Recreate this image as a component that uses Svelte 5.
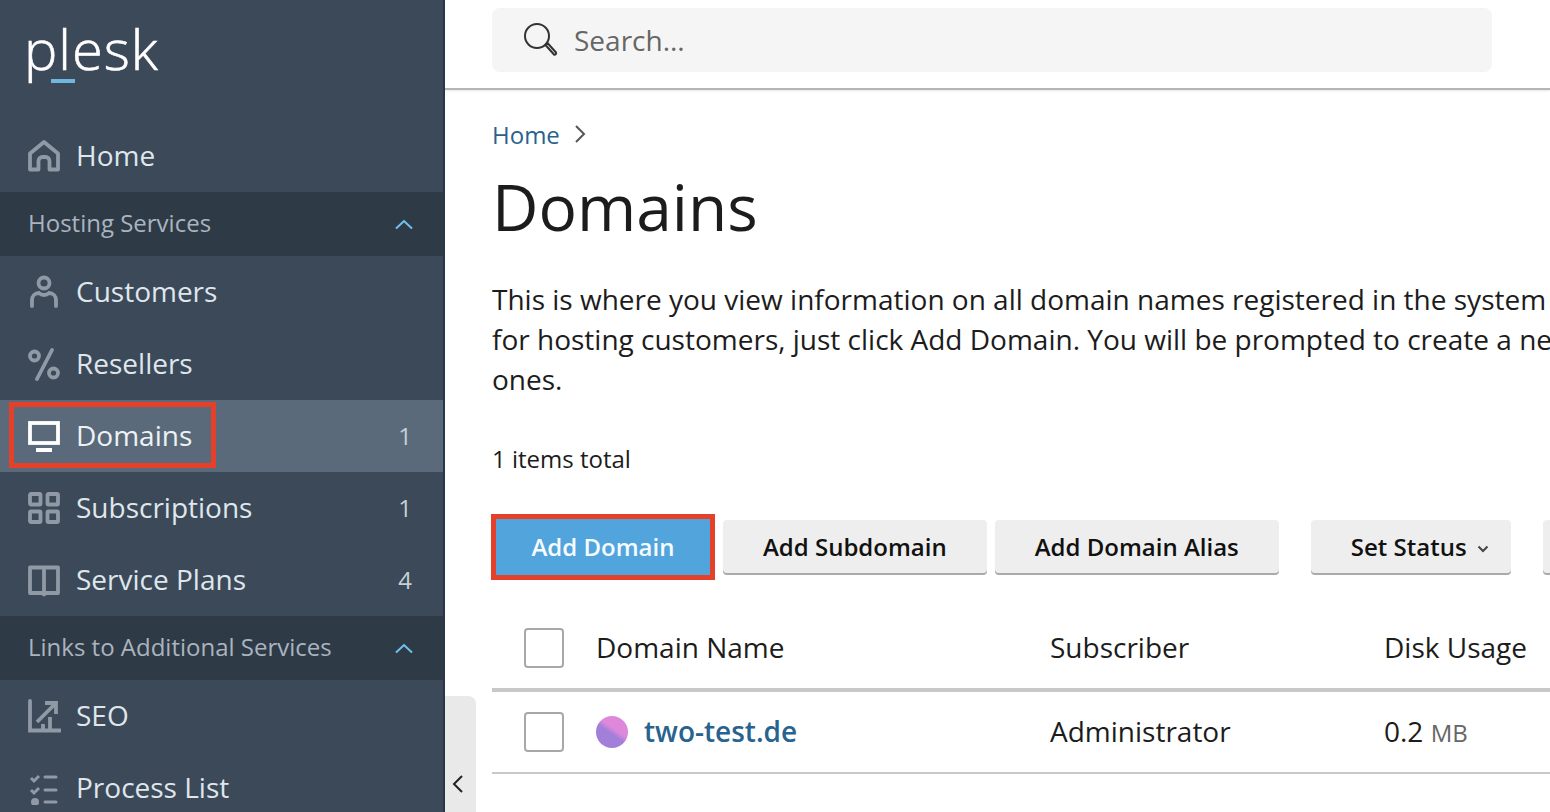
<script>
  const menu = [
    { type: 'item', icon: 'home', label: 'Home' },
    { type: 'group', label: 'Hosting Services' },
    { type: 'item', icon: 'user', label: 'Customers' },
    { type: 'item', icon: 'percent', label: 'Resellers' },
    { type: 'item', icon: 'monitor', label: 'Domains', count: 1, active: true },
    { type: 'item', icon: 'grid', label: 'Subscriptions', count: 1 },
    { type: 'item', icon: 'book', label: 'Service Plans', count: 4 },
    { type: 'group', label: 'Links to Additional Services' },
    { type: 'item', icon: 'chart', label: 'SEO' },
    { type: 'item', icon: 'list', label: 'Process List' }
  ];
</script>

<div class="app">
  <aside class="sidebar">
    <div class="logo"><span class="logo-text">plesk</span><span class="logo-bar"></span></div>
    <nav>
      {#each menu as m}
        {#if m.type === 'group'}
          <div class="group">
            <span>{m.label}</span>
            <svg width="20" height="12" viewBox="0 0 20 12" fill="none" stroke="#6fc3ee" stroke-width="2"><path d="M2 10.500 10 3l8 7.500" /></svg>
          </div>
        {:else}
          <div class="item" class:active={m.active}>
            {#if m.active}<span class="mark"></span>{/if}
            <svg class="ic" width="34" height="34" viewBox="0 0 34 34" fill="none" stroke={m.active ? '#fff' : '#8f9aa5'} stroke-width="3.800">
              {#if m.icon === 'home'}
                <path d="M3 30.500V14.500L17 3l14 11.500v16H22.500V22a4 4 0 0 0-4-4h-3a4 4 0 0 0-4 4v8.500Z" stroke-linejoin="round" />
              {:else if m.icon === 'user'}
                <circle cx="17" cy="8" r="5.500" />
                <path d="M5 31v-6c0-4 3-7 7-7 1.500 1.500 3 2 5 2s3.500-.5 5-2c4 0 7 3 7 7v6" stroke-linecap="round" />
              {:else if m.icon === 'percent'}
                <circle cx="7.500" cy="9" r="4.500" />
                <circle cx="26.500" cy="26" r="4.500" />
                <path d="M25 3 10 32" stroke-linecap="round" />
              {:else if m.icon === 'monitor'}
                <rect x="3" y="4" width="28" height="20" />
                <rect x="9" y="29" width="16" height="4" fill="#fff" stroke="none" />
              {:else if m.icon === 'grid'}
                <rect x="3" y="3" width="10.500" height="10.500" rx="1" />
                <rect x="20.500" y="3" width="10.500" height="10.500" rx="1" />
                <rect x="3" y="20.500" width="10.500" height="10.500" rx="1" />
                <rect x="20.500" y="20.500" width="10.500" height="10.500" rx="1" />
              {:else if m.icon === 'book'}
                <path d="M3 4.500h14h14v25.500H19l-2 1.500-2-1.500H3Z" stroke-linejoin="round" />
                <path d="M17 5v25" />
              {:else if m.icon === 'chart'}
                <path d="M3 2v29.500h30" stroke-linecap="round" />
                <path d="M10 23 27 6M18 4h11v11" />
                <path d="M16 30v-5M23 30V18" />
              {:else if m.icon === 'list'}
                <path d="M4 7l3 3 5-5M4 19l3 3 5-5" stroke-width="3" />
                <circle cx="8" cy="31" r="4" fill="#8f9aa5" stroke="none" />
                <path d="M18 6h11M18 19h11M18 31h11" stroke-linecap="round" stroke-width="3" />
              {/if}
            </svg>
            <span class="label">{m.label}</span>
            {#if m.count}<span class="count">{m.count}</span>{/if}
          </div>
        {/if}
      {/each}
    </nav>
  </aside>

  <button class="collapse" aria-label="Collapse">
    <svg width="12" height="20" viewBox="0 0 12 20" fill="none" stroke="#222" stroke-width="2"><path d="M10 2 2 10l8 8" /></svg>
  </button>

  <main class="main">
    <header class="top">
      <div class="search">
        <svg width="36" height="36" viewBox="0 0 36 36" fill="none" stroke="#333" stroke-width="2">
          <circle cx="15" cy="14" r="12" />
          <path d="m23.500 23 2-2 8.500 9.500a1.500 1.500 0 0 1-2 2L23.500 23Z" stroke-linejoin="round" />
        </svg>
        <span>Search...</span>
      </div>
    </header>

    <div class="content">
      <div class="crumbs">
        <span class="crumb">Home</span>
        <svg width="12" height="20" viewBox="0 0 12 20" fill="none" stroke="#555" stroke-width="2"><path d="m2 2 8 8-8 8" /></svg>
      </div>
      <h1>Domains</h1>
      <p class="desc">
        <span>This is where you view information on all domain names registered in the system</span>
        <span>for hosting customers, just click Add Domain. You will be prompted to create a new</span>
        <span>ones.</span>
      </p>
      <div class="total">1 items total</div>

      <div class="toolbar">
        <button class="btn primary">Add Domain</button>
        <button class="btn">Add Subdomain</button>
        <button class="btn">Add Domain Alias</button>
        <button class="btn status">Set Status
          <svg width="12" height="8" viewBox="0 0 12 8" fill="none" stroke="#444" stroke-width="2"><path d="m1.500 1.500 4.500 4.500 4.500-4.500" /></svg>
        </button>
        <button class="btn more" aria-label="More"></button>
      </div>

      <div class="row head">
        <span class="check"></span>
        <span class="c-name">Domain Name</span>
        <span class="c-sub">Subscriber</span>
        <span class="c-disk">Disk Usage</span>
      </div>
      <div class="row body">
        <span class="check"></span>
        <span class="c-name link">
          <span class="favicon"></span>
          two-test.de
        </span>
        <span class="c-sub">Administrator</span>
        <span class="c-disk">0.2 <small>MB</small></span>
      </div>
    </div>
  </main>
</div>

<style>
  :global(body) {
    margin: 0;
    background: #fff;
  }
  .app {
    display: flex;
    height: 812px;
    width: 1550px;
    overflow: hidden;
    position: relative;
    font-family: "Open Sans", "Noto Sans", sans-serif;
    color: #222;
  }
  .sidebar {
    flex: 0 0 443px;
    background: #3c4959;
    border-right: 2px solid #28374a;
    overflow: hidden;
  }
  .logo {
    height: 120px;
    position: relative;
    box-sizing: border-box;
    padding-left: 24px;
  }
  .logo-text {
    display: block;
    font-weight: 300;
    font-size: 56px;
    line-height: 60px;
    padding-top: 18px;
    color: #fff;
    letter-spacing: 1px;
    -webkit-text-stroke: 0.6px #fff;
  }
  .logo-bar {
    position: absolute;
    left: 51px;
    top: 79px;
    width: 24px;
    height: 4px;
    background: #6db8dc;
  }
  .group {
    height: 64px;
    box-sizing: border-box;
    background: #2f3a47;
    color: #aab4bf;
    font-size: 24px;
    display: flex;
    align-items: center;
    justify-content: space-between;
    padding: 0 29px 0 28px;
  }
  .group span {
    margin-bottom: 4px;
  }
  .item {
    height: 72px;
    display: flex;
    align-items: center;
    padding-left: 27px;
    padding-right: 31px;
    color: #dfe6ec;
    font-size: 28px;
    position: relative;
  }
  .item.active {
    background: #5a6a7b;
    color: #eef2f5;
  }
  .mark {
    position: absolute;
    left: 9px;
    top: 2px;
    width: 207px;
    height: 66px;
    box-sizing: border-box;
    border: 5px solid #e5402a;
  }
  .ic {
    flex: none;
    margin-right: 15px;
  }
  .label {
    flex: 1;
    margin-bottom: 2px;
  }
  .count {
    font-size: 24px;
    color: #c7d0d8;
    margin-bottom: 2px;
  }
  .collapse {
    position: absolute;
    left: 445px;
    top: 696px;
    width: 31px;
    height: 116px;
    border: 0;
    padding: 78px 5px 0 0;
    background: #e9e9e9;
    border-radius: 0 8px 0 0;
    display: flex;
    align-items: flex-start;
    justify-content: center;
  }
  .main {
    flex: 1;
    min-width: 0;
    overflow: hidden;
  }
  .top {
    height: 88px;
    border-bottom: 2px solid #b5b5b5;
    padding-left: 47px;
    box-shadow: 0 1px 2px rgba(0, 0, 0, 0.1);
  }
  .search {
    margin-top: 8px;
    width: 1000px;
    height: 64px;
    background: #f5f5f5;
    border-radius: 8px;
    display: inline-flex;
    align-items: center;
    box-sizing: border-box;
    padding-left: 30px;
    gap: 16px;
    color: #666;
    font-size: 28px;
    vertical-align: top;
  }
  .content {
    padding: 24px 0 0 47px;
    white-space: nowrap;
  }
  .crumbs {
    display: flex;
    align-items: center;
    gap: 14px;
    height: 40px;
  }
  .crumb {
    color: #28628f;
    font-size: 24px;
  }
  h1 {
    margin: 9px 0 0;
    font-weight: 400;
    font-size: 64px;
    line-height: 88px;
    color: #1c1c1c;
  }
  .desc {
    margin: 28px 0 0;
    font-size: 28px;
    line-height: 40px;
    color: #1c1c1c;
  }
  .desc span {
    display: block;
  }
  .total {
    margin-top: 40px;
    font-size: 24px;
    line-height: 40px;
    color: #1c1c1c;
  }
  .toolbar {
    margin-top: 41px;
    display: flex;
    align-items: flex-start;
    gap: 8px;
    height: 56px;
  }
  .btn {
    flex: none;
    height: 53px;
    border: 0;
    border-radius: 4px;
    background: #eee;
    box-shadow: 0 2px 0 #aaa;
    font-family: inherit;
    font-size: 24px;
    font-weight: 600;
    color: #111;
    padding: 0 40px;
    white-space: nowrap;
  }
  .primary {
    background: #52a5dc;
    color: #f6fbff;
    outline: 5px solid #e5402a;
    height: 56px;
    margin: -1px 5px 0 4px;
    border-radius: 0;
    box-shadow: none;
    width: 214px;
    padding: 0 0 2px;
  }
  .status {
    margin-left: 24px;
    display: flex;
    align-items: center;
    gap: 10px;
    padding-right: 22px;
  }
  .status svg {
    margin-top: 4px;
  }
  .more {
    margin-left: 24px;
    width: 60px;
  }
  .row {
    display: flex;
    align-items: center;
    width: 1200px;
    box-sizing: border-box;
    padding-left: 32px;
    font-size: 28px;
    color: #1c1c1c;
  }
  .head {
    margin-top: 36px;
    height: 80px;
    padding-bottom: 4px;
    border-bottom: 4px solid #c8c8c8;
  }
  .body {
    height: 82px;
    border-bottom: 2px solid #c8c8c8;
  }
  .check {
    flex: none;
    width: 40px;
    height: 40px;
    box-sizing: border-box;
    border: 2px solid #a8a8a8;
    border-radius: 4px;
  }
  .c-name {
    flex: none;
    width: 454px;
    margin: 0 0 2px 32px;
    display: flex;
    align-items: center;
    gap: 16px;
  }
  .c-sub {
    flex: none;
    width: 334px;
    margin-bottom: 2px;
  }
  .c-disk {
    margin-bottom: 2px;
  }
  .link {
    color: #28628f;
    font-weight: 600;
  }
  .favicon {
    flex: none;
    width: 32px;
    height: 32px;
    margin-top: 2px;
    border-radius: 50%;
    background: linear-gradient(215deg, #de88dc 0 42%, #a27fd8 54%);
  }
  small {
    font-size: 24px;
    color: #666;
  }
</style>
